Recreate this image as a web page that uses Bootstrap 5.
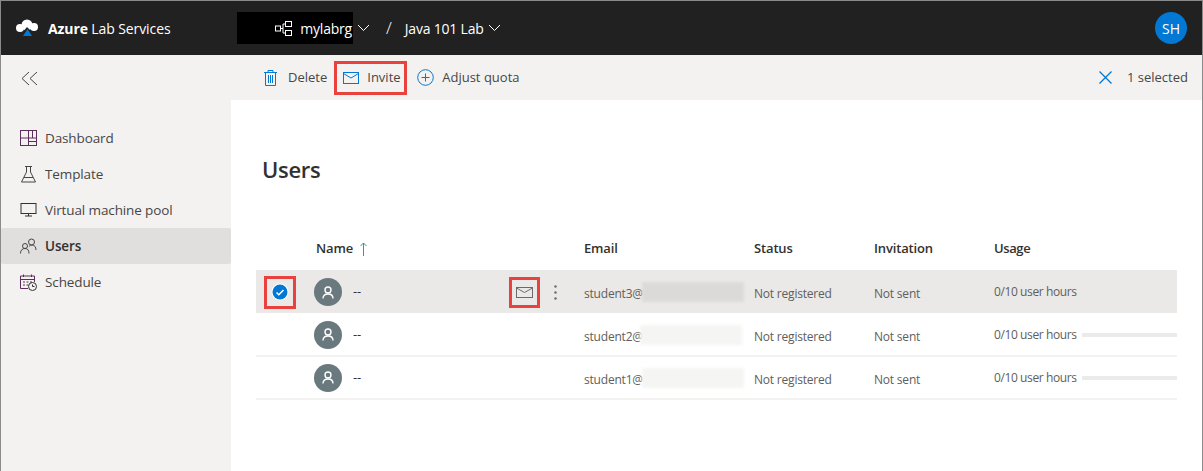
<!DOCTYPE html>
<html lang="en">

<head>
    <meta charset="UTF-8">
    <meta name="viewport" content="width=device-width, initial-scale=1.0">
    <title>Azure Lab Services</title>
    <link href="https://cdn.jsdelivr.net/npm/bootstrap@5.3.0/dist/css/bootstrap.min.css" rel="stylesheet">
    <style>
        html, body { height: 100%; }
        body {
            font-family: "Open Sans", "Liberation Sans", sans-serif;
            font-size: 13px;
            color: #323130;
            overflow: hidden;
        }
        .shot-frame { height: 471px; border: solid #8a8a8a; border-width: 1px 1px 0 1px; }
        .top-bar { height: 54px; background: #212121; color: #fff; padding-left: 14px; padding-right: 15px; }
        .brand-text { width: 189px; font-size: 14px; margin-left: 8px; letter-spacing: -.1px; }
        .redacted-crumb { width: 116px; height: 32px; background: #000; padding-right: 1px; }
        .crumb-text { font-size: 14px; letter-spacing: -.2px; }
        .crumb-slash { font-size: 17px; margin: 0 13px 0 16px; font-weight: 300; }
        .user-circle { width: 32px; height: 32px; border-radius: 50%; background: #0078d4; font-size: 14px; }
        .tool-bar { height: 45px; background: #f3f2f1; }
        .collapse-cell { width: 230px; padding-left: 20px; }
        .tool-item { font-size: 13px; height: 34px; gap: 8px; color: #484644; }
        .tool-item svg { color: #0078d4; }
        .delete-item { padding-left: 33px; gap: 11px; }
        .red-box { border: 3px solid #e8413e; }
        .invite-box { width: 73px; padding-left: 6px; margin: 0 10px 0 7px; }
        .selected-info { margin-right: 14px; gap: 15px; color: #484644; }
        .side-nav { width: 230px; background: #f3f2f1; padding-top: 20px; }
        .side-link { height: 36px; padding-left: 19px; gap: 8px; color: #484644; font-size: 13.5px; letter-spacing: -.12px; }
        .side-link span { padding-top: 1px; }
        .side-active { background: #e1dfdd; color: #323130; font-weight: 600; border-radius: 2px; }
        .side-icon { width: 17px; color: #5c2e5c; flex: none; }
        .main-area { padding: 0 25px; }
        .page-title { font-size: 22px; font-weight: 600; margin: 53px 0 0 6px; line-height: 32px; letter-spacing: -.3px; }
        .user-table { margin-top: 42px; width: 921px; }
        .table-head { height: 43px; font-weight: 600; letter-spacing: -.15px; font-size: 13px; }
        .name-head { padding-left: 2px; }
        .table-line { height: 43px; border-bottom: 2px solid #f3f2f1; font-size: 12px; color: #605e5c; letter-spacing: -.2px; }
        .table-line .cell-email span, .table-line .cell-status, .table-line .cell-invite { padding-top: 5px; }
        .line-picked { background: #ebe9e7; border-bottom: 0; padding-top: 1px; margin-bottom: 1px; }
        .line-picked .cell-email span, .line-picked .cell-status, .line-picked .cell-invite { padding-top: 3px; }
        .cell-check { width: 58px; flex: none; padding-left: 8px; }
        .cell-name { width: 270px; flex: none; }
        .cell-email { width: 170px; flex: none; }
        .cell-status { width: 120px; flex: none; }
        .cell-invite { width: 120px; flex: none; }
        .cell-usage { flex: 1; min-width: 0; letter-spacing: -.4px; }
        .check-box { width: 32px; height: 33px; }
        .avatar { width: 28px; height: 28px; border-radius: 50%; background: #69797e; margin-right: 11px; flex: none; }
        .dash-text { color: #323130; width: 156px; font-size: 13px; }
        .mail-box { width: 31px; height: 31px; margin-right: 14px; color: #6b6a68; }
        .blur-box { width: 102px; height: 20px; background: #dcdad8; filter: blur(1.5px); margin-left: -1px; }
        .blur-light { background: #f5f5f4; }
        .blur-shift { margin-left: -3px; }
        .usage-bar { height: 4px; background: #edebe9; flex: 1; margin-left: 5px; }
        .usage-cell { margin-top: 1px; }
        .line-picked .usage-cell { margin-top: -1px; }
    </style>
</head>

<body>
    <div class="shot-frame d-flex flex-column">
        <header class="top-bar d-flex align-items-center flex-none">
            <svg width="25" height="18" viewBox="0 0 25 18">
                <circle cx="5" cy="9" r="4" fill="#fff"/>
                <circle cx="12" cy="6" r="5.5" fill="#fff"/>
                <circle cx="19" cy="8" r="4" fill="#fff"/>
                <path d="M8 13 L12 8 L17 13 Z" fill="#212121"/>
                <path d="M8 17 L12.5 10 L17 17 Z" fill="#0078d4"/>
            </svg>
            <span class="brand-text"><b>Azure</b> Lab Services</span>
            <div class="redacted-crumb d-flex align-items-center justify-content-end">
                <svg width="17" height="15" viewBox="0 0 17 15" fill="none" stroke="#fff"><rect x=".5" y="5" width="5" height="5"/><rect x="10.5" y=".5" width="6" height="5"/><rect x="10.5" y="9.5" width="6" height="5"/><path d="M5.5 7.5H8V3H10.5M8 7.5V12H10.5"/></svg>
                <span class="crumb-text ms-2">mylabrg</span>
            </div>
            <svg class="ms-1" width="13" height="8" viewBox="0 0 13 8" fill="none" stroke="#fff"><path d="M1 1l5.5 5.5L12 1"/></svg>
            <span class="crumb-slash">/</span>
            <span class="crumb-text">Java 101 Lab</span>
            <svg class="ms-1" width="13" height="8" viewBox="0 0 13 8" fill="none" stroke="#fff"><path d="M1 1l5.5 5.5L12 1"/></svg>
            <div class="user-circle d-flex align-items-center justify-content-center ms-auto">SH</div>
        </header>

        <div class="tool-bar d-flex align-items-center">
            <div class="collapse-cell">
                <svg width="17" height="15" viewBox="0 0 17 15" fill="none" stroke="#484644"><path d="M8 1L1 7.5 8 14M16 1L9 7.5 16 14"/></svg>
            </div>
            <div class="tool-item delete-item d-flex align-items-center">
                <svg width="13" height="16" viewBox="0 0 13 16" fill="none" stroke="currentColor"><path d="M0 2.5H13M4 2.5V.5H9V2.5M1.5 2.5V15.5H11.5V2.5M4.5 5V13M6.5 5V13M8.5 5V13"/></svg>
                <span>Delete</span>
            </div>
            <div class="tool-item invite-box red-box d-flex align-items-center">
                <svg width="16" height="12" viewBox="0 0 16 12" fill="none" stroke="currentColor"><rect x=".5" y=".5" width="15" height="11"/><path d="M.5 1.5L8 6l7.5-4.5"/></svg>
                <span>Invite</span>
            </div>
            <div class="tool-item d-flex align-items-center">
                <svg width="17" height="17" viewBox="0 0 17 17" fill="none" stroke="currentColor"><circle cx="8.5" cy="8.5" r="7.8"/><path d="M8.5 4.5V12.5M4.5 8.5H12.5"/></svg>
                <span>Adjust quota</span>
            </div>
            <div class="selected-info d-flex align-items-center ms-auto">
                <svg width="13" height="13" viewBox="0 0 13 13" fill="none" stroke="#0078d4" stroke-width="1.3"><path d="M.5.5l12 12M12.5.5l-12 12"/></svg>
                <span>1 selected</span>
            </div>
        </div>

        <div class="d-flex flex-grow-1">
            <nav class="side-nav">
                <div class="side-link d-flex align-items-center">
                    <svg class="side-icon" height="16" viewBox="0 0 17 16" fill="none" stroke="currentColor"><rect x=".5" y=".5" width="16" height="15"/><path d="M8.5.5V15.5M.5 8H16.5M8.5 11.5H16.5M12.5 .5V8"/></svg>
                    <span>Dashboard</span>
                </div>
                <div class="side-link d-flex align-items-center">
                    <svg class="side-icon" height="17" viewBox="0 0 17 17" fill="none" stroke="#484644"><path d="M5 .5H12M6.5 .5V6L1.5 16H15.5L10.5 6V.5M4 11.5H13"/></svg>
                    <span>Template</span>
                </div>
                <div class="side-link d-flex align-items-center">
                    <svg class="side-icon" height="14" viewBox="0 0 17 14" fill="none" stroke="#323130"><rect x="1" y=".5" width="15" height="10"/><path d="M8.5 10.5V13M5 13H12"/></svg>
                    <span>Virtual machine pool</span>
                </div>
                <div class="side-link side-active d-flex align-items-center">
                    <svg class="side-icon" height="16" viewBox="0 0 17 16" fill="none" stroke="#484644"><circle cx="11.5" cy="4" r="3"/><circle cx="5" cy="8" r="2.5"/><path d="M.5 15.5C.5 12 2.5 10.5 5 10.5S9 12 9 15.5M9 8.5C10 7.5 11 7 12 7C14.5 7 16 9 16 12"/></svg>
                    <span>Users</span>
                </div>
                <div class="side-link d-flex align-items-center">
                    <svg class="side-icon" height="17" viewBox="0 0 17 17" fill="none" stroke="currentColor"><path d="M8 14.5H.5V2H14.5V8M.5 5.5H14.5M3.5 .5V3M11.5 .5V3M3 8H5M6.5 8H8.5M10 8H12M3 11H5M6.5 11H8.5"/><circle cx="12.5" cy="12.5" r="4" stroke="#323130"/><path d="M12.5 10.5V12.5H14.5" stroke="#323130"/></svg>
                    <span>Schedule</span>
                </div>
            </nav>

            <main class="main-area flex-grow-1">
                <h1 class="page-title">Users</h1>
                <div class="user-table">
                    <div class="table-head d-flex align-items-center">
                        <div class="cell-check"></div>
                        <div class="cell-name name-head">Name <svg class="ms-1" width="7" height="14" viewBox="0 0 7 14" fill="none" stroke="#3d9a8b"><path d="M3.5 14V1M.5 4l3-3 3 3"/></svg></div>
                        <div class="cell-email">Email</div>
                        <div class="cell-status">Status</div>
                        <div class="cell-invite">Invitation</div>
                        <div class="cell-usage">Usage</div>
                    </div>

                    <div class="table-line line-picked d-flex align-items-center">
                        <div class="cell-check">
                            <div class="check-box red-box d-flex align-items-center justify-content-center">
                                <svg width="18" height="18" viewBox="0 0 18 18"><circle cx="9" cy="9" r="8.5" fill="#fff"/><circle cx="9" cy="9" r="7.5" fill="#0078d4"/><path d="M5.5 9.5l2.3 2.2 4.7-4.7" fill="none" stroke="#fff" stroke-width="1.5"/></svg>
                            </div>
                        </div>
                        <div class="cell-name d-flex align-items-center">
                            <div class="avatar d-flex align-items-center justify-content-center"><svg width="12" height="13" viewBox="0 0 12 13" fill="none" stroke="#fff" stroke-width="1.4"><circle cx="6" cy="4" r="3"/><path d="M1 12.5C1 9.5 3 8 6 8s5 1.5 5 4.5"/></svg></div>
                            <span class="dash-text">--</span>
                            <div class="mail-box red-box d-flex align-items-center justify-content-center">
                                <svg width="17" height="11" viewBox="0 0 17 11" fill="none" stroke="currentColor"><rect x=".5" y=".5" width="16" height="10"/><path d="M.5 1l8 4.5 8-4.5"/></svg>
                            </div>
                            <svg width="3" height="15" viewBox="0 0 3 15" fill="#6b6a68"><circle cx="1.5" cy="1.5" r="1.2"/><circle cx="1.5" cy="7.5" r="1.2"/><circle cx="1.5" cy="13.5" r="1.2"/></svg>
                        </div>
                        <div class="cell-email d-flex align-items-center"><span>student3@</span><div class="blur-box"></div></div>
                        <div class="cell-status">Not registered</div>
                        <div class="cell-invite">Not sent</div>
                        <div class="cell-usage usage-cell">0/10 user hours</div>
                    </div>

                    <div class="table-line d-flex align-items-center">
                        <div class="cell-check"></div>
                        <div class="cell-name d-flex align-items-center">
                            <div class="avatar d-flex align-items-center justify-content-center"><svg width="12" height="13" viewBox="0 0 12 13" fill="none" stroke="#fff" stroke-width="1.4"><circle cx="6" cy="4" r="3"/><path d="M1 12.5C1 9.5 3 8 6 8s5 1.5 5 4.5"/></svg></div>
                            <span class="dash-text">--</span>
                        </div>
                        <div class="cell-email d-flex align-items-center"><span>student2@</span><div class="blur-box blur-light blur-shift"></div></div>
                        <div class="cell-status">Not registered</div>
                        <div class="cell-invite">Not sent</div>
                        <div class="cell-usage usage-cell d-flex align-items-center"><span>0/10 user hours</span><div class="usage-bar"></div></div>
                    </div>

                    <div class="table-line d-flex align-items-center">
                        <div class="cell-check"></div>
                        <div class="cell-name d-flex align-items-center">
                            <div class="avatar d-flex align-items-center justify-content-center"><svg width="12" height="13" viewBox="0 0 12 13" fill="none" stroke="#fff" stroke-width="1.4"><circle cx="6" cy="4" r="3"/><path d="M1 12.5C1 9.5 3 8 6 8s5 1.5 5 4.5"/></svg></div>
                            <span class="dash-text">--</span>
                        </div>
                        <div class="cell-email d-flex align-items-center"><span>student1@</span><div class="blur-box blur-light"></div></div>
                        <div class="cell-status">Not registered</div>
                        <div class="cell-invite">Not sent</div>
                        <div class="cell-usage usage-cell d-flex align-items-center"><span>0/10 user hours</span><div class="usage-bar"></div></div>
                    </div>
                </div>
            </main>
        </div>
    </div>
    <script src="https://cdn.jsdelivr.net/npm/bootstrap@5.3.0/dist/js/bootstrap.bundle.min.js"></script>
</body>

</html>
